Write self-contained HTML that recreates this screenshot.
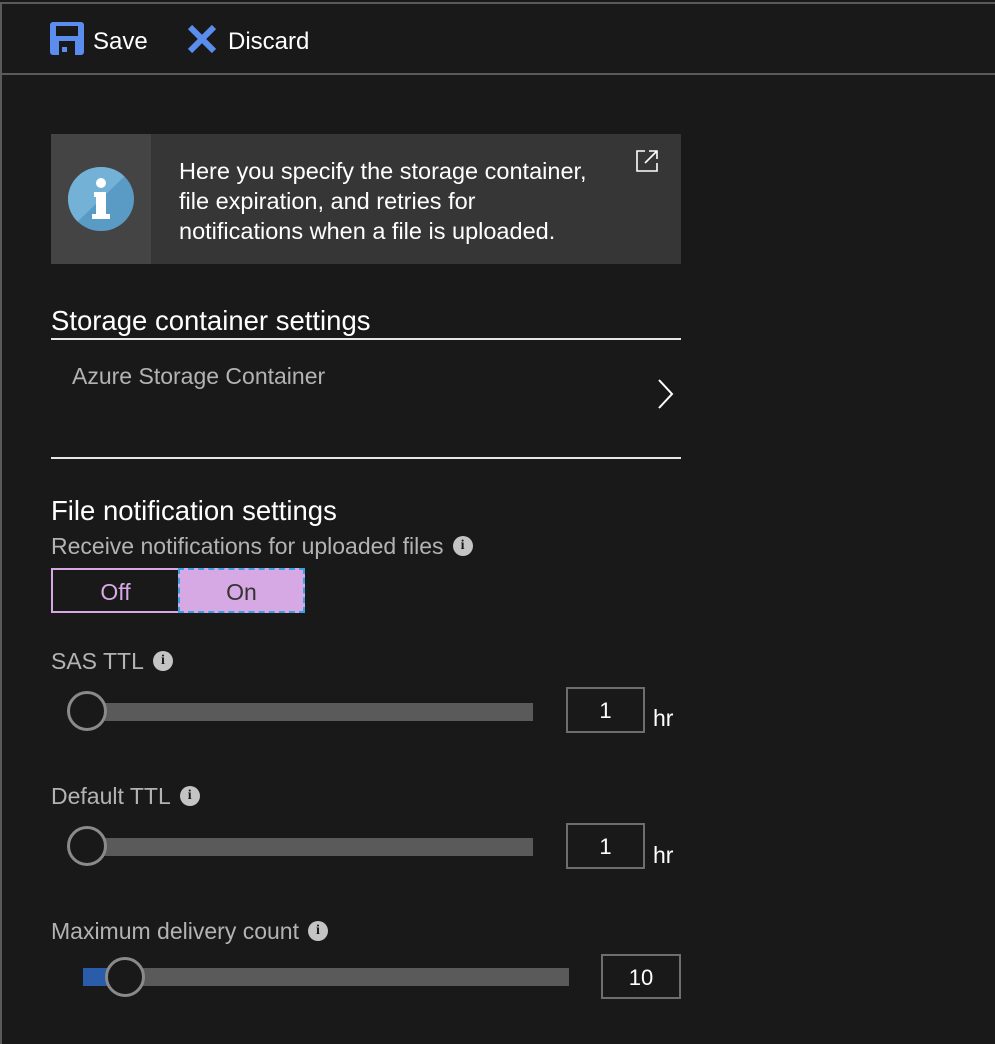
<!DOCTYPE html>
<html><head><meta charset="utf-8"><style>
*{margin:0;padding:0;box-sizing:border-box}
body{width:995px;height:1044px;background:#191919;font-family:"Segoe UI","Liberation Sans",sans-serif;color:#fff;position:relative;overflow:hidden}
.a{position:absolute;white-space:nowrap}
.lbl{color:#b3b3b3;font-size:23px;line-height:28px}
.info{display:inline-block;width:20px;height:20px;border-radius:50%;background:#c4c4c4;color:#191919;font:bold 14px "Liberation Serif",serif;text-align:center;line-height:20px;vertical-align:middle;margin-left:9px;position:relative;top:-2px}
.track{position:absolute;height:18px;background:#5a5a5a}
.thumb{position:absolute;width:40px;height:40px;border-radius:50%;border:3px solid #8a8a8a;background:#191919}
.box{position:absolute;border:2px solid #6e6e6e;font-size:22px;text-align:center;color:#fff}
</style></head><body>
<div class="a" style="left:0;top:2px;width:995px;height:2px;background:#5a5a5a"></div>
<div class="a" style="left:0;top:2px;width:2px;height:1042px;background:#5a5a5a"></div>
<div class="a" style="left:0;top:73px;width:995px;height:2px;background:#5a5a5a"></div>
<svg class="a" style="left:50px;top:22px" width="34" height="33" viewBox="0 0 34 33"><path d="M3 0h28a3 3 0 0 1 3 3v27a3 3 0 0 1-3 3H3a3 3 0 0 1-3-3V3a3 3 0 0 1 3-3z" fill="#5b8def"/><rect x="6" y="4" width="22" height="10" fill="#191919"/><rect x="9" y="19" width="16" height="14" fill="#191919"/><rect x="12" y="25" width="5" height="5" fill="#5b8def"/></svg>
<div class="a" style="left:93px;top:28px;font-size:24px">Save</div>
<svg class="a" style="left:187px;top:25px" width="30" height="28"><path d="M3 2L27 26M27 2L3 26" stroke="#5b8def" stroke-width="6"/></svg>
<div class="a" style="left:228px;top:28px;font-size:24px">Discard</div>
<div class="a" style="left:51px;top:134px;width:630px;height:130px;background:#363636"></div>
<div class="a" style="left:51px;top:134px;width:100px;height:130px;background:#444"></div>
<svg class="a" style="left:68px;top:167px" width="66" height="64"><defs><clipPath id="c"><ellipse cx="33" cy="32" rx="33" ry="32"/></clipPath></defs><ellipse cx="33" cy="32" rx="33" ry="32" fill="#5a9bc6"/><path d="M0 64L0 0L66 0Z" fill="#76b4d8" clip-path="url(#c)" opacity=".9"/><circle cx="33" cy="16" r="5" fill="#fff"/><path d="M26 25h12v22h4v5H24v-5h4V30h-2z" fill="#fff"/></svg>
<div class="a" style="left:179px;top:156px;font-size:23.5px;line-height:30px;width:440px">Here you specify the storage container,<br>file expiration, and retries for<br>notifications when a file is uploaded.</div>
<svg class="a" style="left:636px;top:150px" width="22" height="22"><path d="M9 1H1v20h20v-8M13 1h8v8M21 1L9 13" stroke="#fff" stroke-width="1.6" fill="none"/></svg>
<div class="a" style="left:51px;top:305px;font-size:27.5px;line-height:32px">Storage container settings</div>
<div class="a" style="left:51px;top:338px;width:630px;height:2px;background:#e6e6e6"></div>
<div class="a lbl" style="left:72px;top:362px">Azure Storage Container</div>
<svg class="a" style="left:656px;top:378px" width="20" height="32"><path d="M3 2L16 16L3 30" stroke="#fff" stroke-width="2" fill="none"/></svg>
<div class="a" style="left:51px;top:495px;width:630px;height:2px;background:transparent"></div>
<div class="a" style="left:51px;top:457px;width:630px;height:2px;background:#e6e6e6"></div>
<div class="a" style="left:51px;top:495px;font-size:27.5px;line-height:32px">File notification settings</div>
<div class="a lbl" style="left:51px;top:532px">Receive notifications for uploaded files<span class="info">i</span></div>
<div class="a" style="left:51px;top:568px;width:127px;height:45px;border:2px solid #d6a8e4;border-right:none;color:#d6a8e4;font-size:23px;text-align:center;line-height:45px">Off</div>
<div class="a" style="left:178px;top:568px;width:127px;height:45px;background:#d6a8e4;border:2px dashed #3aa0e0;color:#333;font-size:23px;text-align:center;line-height:45px">On</div>
<div class="a lbl" style="left:51px;top:647px">SAS TTL<span class="info">i</span></div>
<div class="track" style="left:87px;top:703px;width:446px"></div>
<div class="thumb" style="left:67px;top:691px"></div>
<div class="box" style="left:566px;top:687px;width:79px;height:46px;line-height:44px">1</div>
<div class="a" style="left:653px;top:705px;font-size:23px">hr</div>
<div class="a lbl" style="left:51px;top:782px">Default TTL<span class="info">i</span></div>
<div class="track" style="left:87px;top:838px;width:446px"></div>
<div class="thumb" style="left:67px;top:826px"></div>
<div class="box" style="left:566px;top:823px;width:79px;height:46px;line-height:44px">1</div>
<div class="a" style="left:653px;top:842px;font-size:23px">hr</div>
<div class="a lbl" style="left:51px;top:917px">Maximum delivery count<span class="info">i</span></div>
<div class="track" style="left:83px;top:968px;width:486px"></div>
<div class="a" style="left:83px;top:968px;width:30px;height:18px;background:#2a5caa"></div>
<div class="thumb" style="left:105px;top:957px"></div>
<div class="box" style="left:601px;top:954px;width:80px;height:45px;line-height:43px">10</div>
</body></html>
